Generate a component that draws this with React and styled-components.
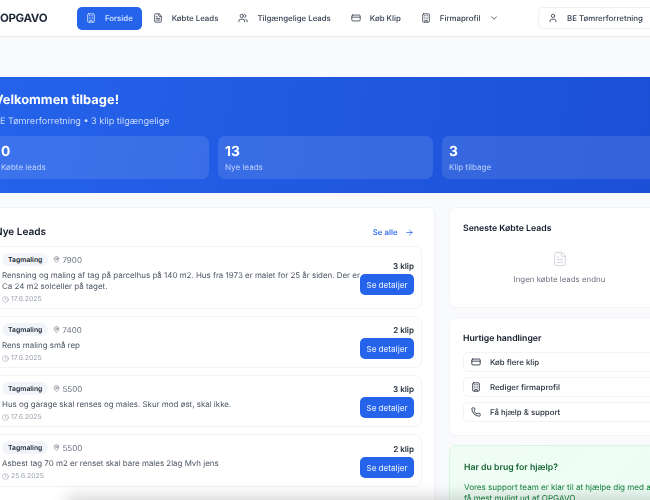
import React from "react";
import styled, { createGlobalStyle } from "styled-components";
import {
  ArrowRight,
  Building,
  ChevronDown,
  Clock,
  CreditCard,
  FileText,
  MapPin,
  Phone,
  User,
  Users
} from "lucide-react";

const GlobalStyle = createGlobalStyle`
  html, body {
    margin: 0;
    padding: 0;
    background: #f9fafb;
    font-family: Inter, "Liberation Sans", sans-serif;
    color: #111827;
    text-rendering: geometricPrecision;
  }
`;

const Viewport = styled.div`
  position: relative;
  width: 650px;
  height: 500px;
  overflow: hidden;
  background: #f9fafb;
`;

const Page = styled.div`
  width: 689px;
  margin-left: -19px;
  filter: blur(0.35px);
`;

const Header = styled.header`
  display: flex;
  align-items: center;
  height: 36px;
  padding: 0 7px 0 19px;
  background: #fff;
  border-bottom: 1px solid #e8ebf0;
`;

const Logo = styled.div`
  width: 77px;
  font-size: 11.5px;
  font-weight: 700;
  letter-spacing: -0.35px;
  color: #1f2937;
`;

const Nav = styled.nav`
  display: flex;
  gap: 2px;
  flex: 1;
`;

const NavItem = styled.div`
  display: flex;
  align-items: center;
  gap: 9px;
  height: 23px;
  padding: 0 9px;
  border-radius: 5px;
  font-size: 7.85px;
  font-weight: 500;
  white-space: nowrap;
  background: ${props => (props.$active ? "#2563eb" : "transparent")};
  color: ${props => (props.$active ? "#dbeafe" : "#374151")};
`;

const UserButton = styled.div`
  display: flex;
  align-items: center;
  gap: 9px;
  width: 125px;
  height: 22px;
  box-sizing: border-box;
  padding: 0 9px;
  border: 1px solid #eef0f3;
  border-radius: 5px;
  font-size: 7.85px;
  font-weight: 500;
  color: #374151;
  white-space: nowrap;
`;

const Hero = styled.section`
  margin-top: 40px;
  height: 116px;
  box-sizing: border-box;
  padding: 16px 13px 0;
  background: linear-gradient(100deg, #2563eb, #1b4fd6);
  color: #fff;
`;

const HeroTitle = styled.h1`
  margin: 0;
  font-size: 12.9px;
  line-height: 16px;
  font-weight: 700;
`;

const HeroSub = styled.p`
  margin: 6px 0 0;
  font-size: 9.1px;
  line-height: 14px;
  color: #c9d9fb;
`;

const StatRow = styled.div`
  display: grid;
  grid-template-columns: repeat(3, 215px);
  gap: 9px;
  margin-top: 7px;
`;

const Stat = styled.div`
  height: 43px;
  box-sizing: border-box;
  padding: 8px 7px 0;
  border-radius: 7px;
  background: rgba(255, 255, 255, 0.11);
`;

const StatValue = styled.div`
  font-size: 13.8px;
  line-height: 17px;
  font-weight: 700;
`;

const StatLabel = styled.div`
  font-size: 8.05px;
  line-height: 12px;
  color: #bfd3fb;
`;

const Main = styled.main`
  display: grid;
  grid-template-columns: 454px 221px;
  gap: 14px;
  margin-top: 14px;
`;

const Card = styled.section`
  box-sizing: border-box;
  background: #fff;
  border: 1px solid #f1f3f6;
  border-radius: 7px;
`;

const LeadsCard = styled(Card)`
  height: 320px;
  padding: 13.5px 12px 13px;
`;

const LeadsHead = styled.div`
  display: flex;
  align-items: center;
  justify-content: space-between;
  height: 21px;
  margin-bottom: 3.5px;
  padding: 0 8px 0 0;
`;

const LeadsTitle = styled.h2`
  margin: 0;
  font-size: 10px;
  font-weight: 600;
  padding-left: 1px;
`;

const SeeAll = styled.div`
  display: flex;
  align-items: center;
  gap: 7.5px;
  font-size: 7.85px;
  font-weight: 500;
  color: #2563eb;
`;

const LeadList = styled.div`
  display: flex;
  flex-direction: column;
  gap: 7px;
`;

const Lead = styled.article`
  display: flex;
  justify-content: space-between;
  box-sizing: border-box;
  height: ${props => props.$height}px;
  padding: 6px 7px 0;
  border: 1px solid #f1f3f6;
  border-radius: 7px;
`;

const LeadBody = styled.div`
  flex: 1;
  min-width: 0;
`;

const LeadMeta = styled.div`
  display: flex;
  align-items: center;
  gap: 5px;
  height: 13px;
`;

const Tag = styled.span`
  display: flex;
  align-items: center;
  height: 13px;
  padding: 0 6px;
  border-radius: 7px;
  background: #f1f5f9;
  font-size: 6.85px;
  font-weight: 600;
  color: #1f2937;
`;

const Zip = styled.span`
  display: flex;
  align-items: center;
  gap: 2px;
  font-size: 8.05px;
  color: #6b7280;
`;

const Description = styled.p`
  width: 361px;
  margin: 4px 0 0;
  font-size: 7.94px;
  line-height: 11px;
  color: #4b5563;
`;

const LeadDate = styled.div`
  display: flex;
  align-items: center;
  gap: 2px;
  margin-top: 1px;
  font-size: 6.9px;
  line-height: 12px;
  color: #9ca3af;
`;

const LeadAside = styled.div`
  display: flex;
  flex-direction: column;
  align-items: flex-end;
  justify-content: flex-end;
  gap: 2px;
  flex: 0 0 54px;
  padding-bottom: ${props => props.$bottom}px;
`;

const Price = styled.div`
  font-size: 8.05px;
  line-height: 12px;
  font-weight: 600;
  color: #1f2937;
`;

const DetailButton = styled.button`
  width: 54px;
  height: 21px;
  padding: 0;
  border: none;
  border-radius: 5px;
  background: #2563eb;
  color: #dbe6fd;
  font-family: inherit;
  font-size: 8.05px;
  font-weight: 500;
`;

const Side = styled.aside`
  display: flex;
  flex-direction: column;
  gap: 9px;
`;

const SideCard = styled(Card)`
  height: ${props => props.$height}px;
  padding: 14px 13px 0;
`;

const SideTitle = styled.h3`
  margin: 0;
  font-size: 8.7px;
  line-height: 14px;
  font-weight: 600;
`;

const Empty = styled.div`
  display: flex;
  flex-direction: column;
  align-items: center;
  gap: 6px;
  margin-top: 15px;
  font-size: 7.9px;
  line-height: 12px;
  color: #6b7280;
`;

const ActionList = styled.div`
  display: flex;
  flex-direction: column;
  gap: 5px;
  margin-top: 6px;
`;

const Action = styled.div`
  display: flex;
  align-items: center;
  gap: 9px;
  box-sizing: border-box;
  height: 20px;
  padding: 0 7px;
  border: 1px solid #f1f3f6;
  border-radius: 5px;
  font-size: 7.85px;
  font-weight: 500;
  color: #1f2937;
`;

const HelpCard = styled.section`
  height: 90px;
  box-sizing: border-box;
  padding: 15px 14px 0;
  border: 1px solid #d7f5e2;
  border-radius: 7px;
  background: linear-gradient(135deg, #f0fdf4, #ecfdf5);
`;

const HelpTitle = styled.h3`
  margin: 0;
  font-size: 8.7px;
  line-height: 14px;
  font-weight: 600;
  color: #166534;
`;

const HelpText = styled.p`
  margin: 7px 0 0;
  font-size: 8.05px;
  line-height: 11px;
  color: #15803d;
`;

const BottomShade = styled.div`
  position: absolute;
  left: 70px;
  right: -80px;
  bottom: -12px;
  height: 12px;
  box-shadow: 0 0 16px 4px rgba(0, 0, 0, 0.16);
`;

const leads = [
  { zip: "7900", klip: 3, height: 63, bottom: 13, date: "17.6.2025", text: "Rensning og maling af tag på parcelhus på 140 m2. Hus fra 1973 er malet for 25 år siden. Der er Ca 24 m2 solceller på taget." },
  { zip: "7400", klip: 2, height: 52, bottom: 8, date: "17.6.2025", text: "Rens maling små rep" },
  { zip: "5500", klip: 3, height: 52, bottom: 8, date: "17.6.2025", text: "Hus og garage skal renses og males. Skur mod øst, skal ikke." },
  { zip: "5500", klip: 2, height: 53, bottom: 8, date: "25.6.2025", text: "Asbest tag 70 m2 er renset skal bare males 2lag Mvh jens" }
];

const navItems = [
  { label: "Købte Leads", icon: FileText },
  { label: "Tilgængelige Leads", icon: Users },
  { label: "Køb Klip", icon: CreditCard }
];

export default function App() {
  return (
    <Viewport>
      <GlobalStyle />
      <Page>
        <Header>
          <Logo>OPGAVO</Logo>
          <Nav>
            <NavItem $active>
              <Building size={10} />
              Forside
            </NavItem>
            {navItems.map(({ label, icon: Icon }) => (
              <NavItem key={label}>
                <Icon size={10} />
                {label}
              </NavItem>
            ))}
            <NavItem>
              <Building size={10} />
              Firmaprofil
              <ChevronDown size={10} />
            </NavItem>
          </Nav>
          <UserButton>
            <User size={10} />
            BE Tømrerforretning
          </UserButton>
        </Header>

        <Hero>
          <HeroTitle>Velkommen tilbage!</HeroTitle>
          <HeroSub>BE Tømrerforretning • 3 klip tilgængelige</HeroSub>
          <StatRow>
            <Stat>
              <StatValue>0</StatValue>
              <StatLabel>Købte leads</StatLabel>
            </Stat>
            <Stat>
              <StatValue>13</StatValue>
              <StatLabel>Nye leads</StatLabel>
            </Stat>
            <Stat>
              <StatValue>3</StatValue>
              <StatLabel>Klip tilbage</StatLabel>
            </Stat>
          </StatRow>
        </Hero>

        <Main>
          <LeadsCard>
            <LeadsHead>
              <LeadsTitle>Nye Leads</LeadsTitle>
              <SeeAll>
                Se alle
                <ArrowRight size={9} />
              </SeeAll>
            </LeadsHead>
            <LeadList>
              {leads.map((lead, i) => (
                <Lead key={i} $height={lead.height}>
                  <LeadBody>
                    <LeadMeta>
                      <Tag>Tagmaling</Tag>
                      <Zip>
                        <MapPin size={7} />
                        {lead.zip}
                      </Zip>
                    </LeadMeta>
                    <Description>{lead.text}</Description>
                    <LeadDate>
                      <Clock size={7} />
                      {lead.date}
                    </LeadDate>
                  </LeadBody>
                  <LeadAside $bottom={lead.bottom}>
                    <Price>{lead.klip} klip</Price>
                    <DetailButton>Se detaljer</DetailButton>
                  </LeadAside>
                </Lead>
              ))}
            </LeadList>
          </LeadsCard>

          <Side>
            <SideCard $height={101}>
              <SideTitle>Seneste Købte Leads</SideTitle>
              <Empty>
                <FileText size={16} color="#d1d5db" strokeWidth={1.5} />
                Ingen købte leads endnu
              </Empty>
            </SideCard>
            <SideCard $height={119}>
              <SideTitle>Hurtige handlinger</SideTitle>
              <ActionList>
                <Action>
                  <CreditCard size={10} />
                  Køb flere klip
                </Action>
                <Action>
                  <Building size={10} />
                  Rediger firmaprofil
                </Action>
                <Action>
                  <Phone size={10} />
                  Få hjælp &amp; support
                </Action>
              </ActionList>
            </SideCard>
            <HelpCard>
              <HelpTitle>Har du brug for hjælp?</HelpTitle>
              <HelpText>
                Vores support team er klar til at hjælpe dig med at få mest muligt ud af OPGAVO.
              </HelpText>
            </HelpCard>
          </Side>
        </Main>
      </Page>
      <BottomShade />
    </Viewport>
  );
}
